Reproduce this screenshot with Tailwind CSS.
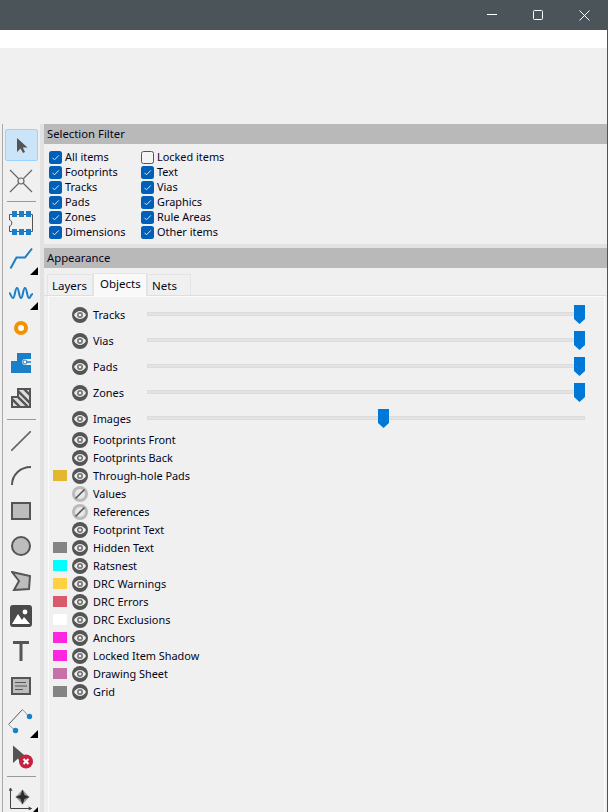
<!DOCTYPE html>
<html lang="en">
<head>
<meta charset="UTF-8">
<title>Appearance</title>
<script src="https://cdn.jsdelivr.net/npm/@tailwindcss/browser@4"></script>
</head>
<body class="w-[608px] h-[812px] overflow-hidden bg-[#f0f0f0] text-[10.900px] text-[#05051a] font-['Noto_Sans',sans-serif]">

<svg class="hidden">
  <symbol id="eye" viewBox="0 0 16 16">
    <circle cx="8" cy="8" r="8" fill="#555"/>
    <path d="M2 8C3.500 5.200 5.700 4 8 4S12.500 5.200 14 8C12.500 10.800 10.300 12 8 12S3.500 10.800 2 8Z" fill="#eee"/>
    <circle cx="8" cy="8" r="3" fill="#777"/>
    <circle cx="8" cy="8" r="1.300" fill="#eee"/>
  </symbol>
  <symbol id="eyeoff" viewBox="0 0 16 16">
    <circle cx="8" cy="8" r="8" fill="#bbb"/>
    <circle cx="8" cy="8" r="5" fill="#e8e8e8"/>
    <path d="M3.500 12.500L12.500 3.500" stroke="#555" stroke-width="1.600"/>
  </symbol>
  <symbol id="check" viewBox="0 0 13 13">
    <rect width="13" height="13" rx="2.500" fill="#005fb8"/>
    <path d="M3.500 6.800L5.500 8.800L9.800 4.400" fill="none" stroke="#dce9f5" stroke-width="1"/>
  </symbol>
  <symbol id="thumb" viewBox="0 0 11 19">
    <path d="M0 0H11V14L5.500 19L0 14Z" fill="#0078d7"/>
  </symbol>
  <symbol id="corner" viewBox="0 0 8 8">
    <path d="M8 0V8H0Z" fill="#000"/>
  </symbol>
</svg>

<!-- title bar -->
<div class="h-[30px] bg-[#4a5459] flex items-center justify-end pr-[1px]">
  <div class="w-[46px] h-[30px] flex items-center justify-center"><svg width="10" height="10"><path d="M0 4.500H10" stroke="#fff"/></svg></div>
  <div class="w-[46px] h-[30px] flex items-center justify-center"><svg width="10" height="10"><rect x=".5" y=".5" width="9" height="9" rx="1" fill="none" stroke="#fff"/></svg></div>
  <div class="w-[46px] h-[30px] flex items-center justify-center"><svg width="11" height="11"><path d="M.5.5L10.500 10.500M10.500.5L.5 10.500" stroke="#fff"/></svg></div>
</div>

<div class="h-[782px] border-r border-[#4a5459]">
  <div class="h-[18px] bg-white"></div>
  <div class="h-[76px]"></div>

  <div class="flex h-[688px]">
    <!-- left toolbar -->
    <div class="w-[3px] shrink-0 pl-[2px]"><div class="w-px h-full bg-[#a8a8a8]"></div></div>
    <div class="w-[37px] shrink-0 pt-[4px] pl-[2px]">
      <div class="h-[35px] w-[33px] pt-[1px]">
        <div class="w-[33px] h-[32px] rounded-[2px] bg-[#cce4f7] border border-[#99d1ff] flex items-center justify-center">
          <svg width="14" height="17" viewBox="0 0 14 17"><path d="M2 1V15L5.500 11.500L8 16L10 15L7.800 10.600H12.500Z" fill="#545454"/></svg>
        </div>
      </div>
      <div class="h-[35px] w-[32px] flex items-center justify-center">
        <svg width="26" height="26" viewBox="0 0 26 26"><path d="M2 2L10.500 10.500M24 2L15.500 10.500M2 24L10.500 15.500M24 24L15.500 15.500" stroke="#666" stroke-width="1.200"/><circle cx="13" cy="13" r="3" fill="#eee" stroke="#666" stroke-width="1.200"/></svg>
      </div>
      <div class="h-[7px] w-[33px] flex items-center"><div class="w-[29px] mx-auto h-px bg-[#999]"></div></div>
      <div class="h-[35px] w-[32px] flex items-center justify-center">
        <svg width="24" height="24" viewBox="0 0 24 24"><path d="M.5 3.500H23.500V20.500H.5V15C3.500 15 3.500 9 .5 9Z" fill="none" stroke="#555"/><path d="M3 0h5v6H3zM10 0h5v6h-5zM17 0h5v6h-5zM3 18h5v6H3zM10 18h5v6h-5zM17 18h5v6h-5z" fill="#1a7fc8"/></svg>
      </div>
      <div class="h-[35px] w-[33px] relative flex items-center justify-center pr-[1px]">
        <svg width="24" height="24" viewBox="0 0 24 24"><path d="M1.500 22.500L7.500 11.500H16L23 2.500" fill="none" stroke="#1a7fc8" stroke-width="2"/></svg>
        <svg class="absolute right-0 bottom-0" width="8" height="8"><use href="#corner"/></svg>
      </div>
      <div class="h-[35px] w-[33px] relative flex items-center justify-center pr-[1px]">
        <svg width="24" height="14" viewBox="0 0 24 14"><path d="M0 7C2 7 2 12 4 12S6 2 8 2 10 12 12 12 14 2 16 2 18 12 20 12 21 8 24 8" fill="none" stroke="#1a7fc8" stroke-width="2"/></svg>
        <svg class="absolute right-0 bottom-0" width="8" height="8"><use href="#corner"/></svg>
      </div>
      <div class="h-[35px] w-[32px] flex items-center justify-center">
        <svg width="14" height="14" viewBox="0 0 14 14"><circle cx="7" cy="7" r="5" fill="#fff" stroke="#f39200" stroke-width="4"/></svg>
      </div>
      <div class="h-[35px] w-[32px] flex items-center justify-center">
        <svg width="20" height="20" viewBox="0 0 20 20"><path d="M6 0H20V6H14C12 6 11 7.500 11 9S12 12 14 12H20V20H0V8H6Z" fill="#1a7fc8"/><circle cx="14" cy="9" r="2" fill="#fff" stroke="#1a7fc8"/><path d="M15 9H20" stroke="#1a7fc8" stroke-width="1.500"/></svg>
      </div>
      <div class="h-[35px] w-[32px] flex items-center justify-center">
        <svg width="20" height="20" viewBox="0 0 20 20"><defs><clipPath id="zc"><path d="M7 1H19V19H1V9H7Z"/></clipPath></defs><path d="M7 1H19V19H1V9H7Z" fill="#ddd" stroke="#555" stroke-width="2"/><path clip-path="url(#zc)" d="M4 0L22 18M0 2L20 22M10 -2L24 12M-2 8L12 22" stroke="#555" stroke-width="2.400"/></svg>
      </div>
      <div class="h-[8px] w-[33px] flex items-center pt-[1px]"><div class="w-[29px] mx-auto h-px bg-[#999]"></div></div>
      <div class="h-[35px] w-[32px] flex items-center justify-center">
        <svg width="20" height="20" viewBox="0 0 20 20"><path d="M0 20L20 0" stroke="#666" stroke-width="1.600"/></svg>
      </div>
      <div class="h-[35px] w-[32px] flex items-center justify-center">
        <svg width="20" height="20" viewBox="0 0 20 20"><path d="M1 19C1 9 9 1 20 1" fill="none" stroke="#555" stroke-width="2"/></svg>
      </div>
      <div class="h-[35px] w-[32px] flex items-center justify-center">
        <div class="w-[20px] h-[18px] bg-[#bdbdbd] border-2 border-[#555]"></div>
      </div>
      <div class="h-[35px] w-[32px] flex items-center justify-center">
        <div class="w-[20px] h-[20px] rounded-full bg-[#bdbdbd] border-2 border-[#555]"></div>
      </div>
      <div class="h-[35px] w-[32px] flex items-center justify-center">
        <svg width="20" height="20" viewBox="0 0 20 20"><path d="M1 1L19 5L18 18L3 19L8 10Z" fill="#bdbdbd" stroke="#555" stroke-width="2"/></svg>
      </div>
      <div class="h-[35px] w-[32px] flex items-center justify-center">
        <svg width="22" height="22" viewBox="0 0 22 22"><rect width="22" height="22" rx="3" fill="#4a4a4a"/><circle cx="15" cy="7" r="2.400" fill="#fff"/><path d="M2 19L8 9L12 15L14 12L20 19Z" fill="#fff"/></svg>
      </div>
      <div class="h-[35px] w-[32px] flex items-center justify-center">
        <svg width="16" height="20" viewBox="0 0 16 20"><path d="M0 0H16V3H9.500V20H6.500V3H0Z" fill="#555"/></svg>
      </div>
      <div class="h-[35px] w-[32px] flex items-center justify-center">
        <svg width="20" height="18" viewBox="0 0 20 18"><rect x="1" y="1" width="18" height="16" fill="#bdbdbd" stroke="#555" stroke-width="2"/><path d="M4 5.500H15M4 9H16M4 12.500H12" stroke="#555"/></svg>
      </div>
      <div class="h-[35px] w-[33px] relative flex items-center justify-center pr-[1px]">
        <svg width="26" height="26" viewBox="0 0 26 26"><path d="M.5 16.500L14.500 1.500" fill="none" stroke="#555"/><path d="M.5 16.500L7 22.500M14.500 1.500L21 8.500" fill="none" stroke="#999"/><circle cx="21.500" cy="8.500" r="2.700" fill="#1a7fc8"/><circle cx="7.500" cy="22.500" r="2.700" fill="#1a7fc8"/></svg>
        <svg class="absolute right-0 bottom-0" width="8" height="8"><use href="#corner"/></svg>
      </div>
      <div class="h-[35px] w-[32px] flex items-center justify-center">
        <svg width="26" height="26" viewBox="0 0 26 26"><path d="M5 2.500V20L10 15.500L12.500 20L15 19L13 14.500H19Z" fill="#545454"/><circle cx="18" cy="18.500" r="7" fill="#c8203f"/><path d="M15.500 16L20.500 21M20.500 16L15.500 21" stroke="#fff" stroke-width="2"/></svg>
      </div>
      <div class="h-[7px] w-[33px] flex items-center"><div class="w-[29px] mx-auto h-px bg-[#999]"></div></div>
      <div class="h-[35px] w-[33px] relative flex items-center justify-center pr-[1px]">
        <svg width="24" height="24" viewBox="0 0 24 24"><path d="M1.500 2V22.500H22.500M1.500 2L0 5M1.500 2L3 5M22.500 22.500L19.500 21M22.500 22.500L19.500 24" fill="none" stroke="#444"/><path d="M13.500 3.500L20.500 11L13.500 18.500L6.500 11Z" fill="#999"/><path d="M13.500 3.500L15.500 9L20.500 11L15.500 13L13.500 18.500L11.500 13L6.500 11L11.500 9Z" fill="#2a2a2a"/></svg>
        <svg class="absolute right-0 bottom-[3px]" width="5" height="5" viewBox="0 0 8 8"><use href="#corner"/></svg>
      </div>
    </div>
    <div class="w-[4px] shrink-0 bg-[#e2e2e2]"></div>

    <!-- right panels -->
    <div class="flex-1 min-w-0 flex flex-col">
      <div class="h-[20px] bg-[#b9b9b9] pl-[3px] text-[11.300px] leading-[20px]">Selection Filter</div>
      <div class="h-[100px] pt-[6px] pl-[5px] flex">
        <div class="w-[92px]">
          <label class="h-[15px] flex items-center gap-[3px]"><svg width="13" height="13"><use href="#check"/></svg>All items</label>
          <label class="h-[15px] flex items-center gap-[3px]"><svg width="13" height="13"><use href="#check"/></svg>Footprints</label>
          <label class="h-[15px] flex items-center gap-[3px]"><svg width="13" height="13"><use href="#check"/></svg>Tracks</label>
          <label class="h-[15px] flex items-center gap-[3px]"><svg width="13" height="13"><use href="#check"/></svg>Pads</label>
          <label class="h-[15px] flex items-center gap-[3px]"><svg width="13" height="13"><use href="#check"/></svg>Zones</label>
          <label class="h-[15px] flex items-center gap-[3px]"><svg width="13" height="13"><use href="#check"/></svg>Dimensions</label>
        </div>
        <div>
          <label class="h-[15px] flex items-center gap-[3px]"><span class="w-[13px] h-[13px] rounded-[2.500px] border border-[#555] bg-[#f4f4f4]"></span>Locked items</label>
          <label class="h-[15px] flex items-center gap-[3px]"><svg width="13" height="13"><use href="#check"/></svg>Text</label>
          <label class="h-[15px] flex items-center gap-[3px]"><svg width="13" height="13"><use href="#check"/></svg>Vias</label>
          <label class="h-[15px] flex items-center gap-[3px]"><svg width="13" height="13"><use href="#check"/></svg>Graphics</label>
          <label class="h-[15px] flex items-center gap-[3px]"><svg width="13" height="13"><use href="#check"/></svg>Rule Areas</label>
          <label class="h-[15px] flex items-center gap-[3px]"><svg width="13" height="13"><use href="#check"/></svg>Other items</label>
        </div>
      </div>
      <div class="h-[4px] bg-[#e2e2e2]"></div>
      <div class="h-[20px] bg-[#b9b9b9] pl-[3px] text-[11.300px] leading-[20px]">Appearance</div>

      <!-- tabs -->
      <div class="h-[28px] pl-[3px] flex items-end border-b border-[#dedede] text-[11.500px]">
        <div class="w-[46px] h-[21px] pt-[1px] pl-[4px] border border-b-0 border-[#e4e4e4] flex items-center">Layers</div>
        <div class="w-[54px] h-[23px] pl-[6px] border border-b-0 border-[#e4e4e4] bg-[#f9f9f9] flex items-center mb-[-1px] pb-[2px]">Objects</div>
        <div class="w-[44px] h-[21px] pt-[1px] pl-[4px] border border-b-0 border-[#e4e4e4] flex items-center">Nets</div>
      </div>

      <!-- object rows -->
      <div class="flex-1 ml-[4px] mr-[2px] border-l border-r border-t border-[#fbfbfb] pl-[4px] pt-[5px]">
        <div class="h-[26px] flex items-center">
          <span class="w-[19px]"></span><svg width="16" height="16"><use href="#eye"/></svg>
          <span class="w-[54px] ml-[5px]">Tracks</span>
          <div class="w-[438px] h-[4px] bg-[#e3e3e3] border border-[#dcdcdc] relative mt-[-3px]"><svg class="absolute left-[426px] top-[-8px]" width="11" height="19"><use href="#thumb"/></svg></div>
        </div>
        <div class="h-[26px] flex items-center">
          <span class="w-[19px]"></span><svg width="16" height="16"><use href="#eye"/></svg>
          <span class="w-[54px] ml-[5px]">Vias</span>
          <div class="w-[438px] h-[4px] bg-[#e3e3e3] border border-[#dcdcdc] relative mt-[-3px]"><svg class="absolute left-[426px] top-[-8px]" width="11" height="19"><use href="#thumb"/></svg></div>
        </div>
        <div class="h-[26px] flex items-center">
          <span class="w-[19px]"></span><svg width="16" height="16"><use href="#eye"/></svg>
          <span class="w-[54px] ml-[5px]">Pads</span>
          <div class="w-[438px] h-[4px] bg-[#e3e3e3] border border-[#dcdcdc] relative mt-[-3px]"><svg class="absolute left-[426px] top-[-8px]" width="11" height="19"><use href="#thumb"/></svg></div>
        </div>
        <div class="h-[26px] flex items-center">
          <span class="w-[19px]"></span><svg width="16" height="16"><use href="#eye"/></svg>
          <span class="w-[54px] ml-[5px]">Zones</span>
          <div class="w-[438px] h-[4px] bg-[#e3e3e3] border border-[#dcdcdc] relative mt-[-3px]"><svg class="absolute left-[426px] top-[-8px]" width="11" height="19"><use href="#thumb"/></svg></div>
        </div>
        <div class="h-[26px] flex items-center">
          <span class="w-[19px]"></span><svg width="16" height="16"><use href="#eye"/></svg>
          <span class="w-[54px] ml-[5px]">Images</span>
          <div class="w-[438px] h-[4px] bg-[#e3e3e3] border border-[#dcdcdc] relative mt-[-3px]"><svg class="absolute left-[230px] top-[-8px]" width="11" height="19"><use href="#thumb"/></svg></div>
        </div>
        <div class="h-[18px] mt-[-1px] flex items-center"><span class="w-[19px]"></span><svg width="16" height="16"><use href="#eye"/></svg><span class="ml-[5px]">Footprints Front</span></div>
        <div class="h-[18px] flex items-center"><span class="w-[19px]"></span><svg width="16" height="16"><use href="#eye"/></svg><span class="ml-[5px]">Footprints Back</span></div>
        <div class="h-[18px] flex items-center"><span class="w-[14px] h-[11px] mr-[5px] mb-[1px] bg-[#e3b72f]"></span><svg width="16" height="16"><use href="#eye"/></svg><span class="ml-[5px]">Through-hole Pads</span></div>
        <div class="h-[18px] flex items-center"><span class="w-[19px]"></span><svg width="16" height="16"><use href="#eyeoff"/></svg><span class="ml-[5px]">Values</span></div>
        <div class="h-[18px] flex items-center"><span class="w-[19px]"></span><svg width="16" height="16"><use href="#eyeoff"/></svg><span class="ml-[5px]">References</span></div>
        <div class="h-[18px] flex items-center"><span class="w-[19px]"></span><svg width="16" height="16"><use href="#eye"/></svg><span class="ml-[5px]">Footprint Text</span></div>
        <div class="h-[18px] flex items-center"><span class="w-[14px] h-[11px] mr-[5px] mb-[1px] bg-[#848484]"></span><svg width="16" height="16"><use href="#eye"/></svg><span class="ml-[5px]">Hidden Text</span></div>
        <div class="h-[18px] flex items-center"><span class="w-[14px] h-[11px] mr-[5px] mb-[1px] bg-[#00ffff]"></span><svg width="16" height="16"><use href="#eye"/></svg><span class="ml-[5px]">Ratsnest</span></div>
        <div class="h-[18px] flex items-center"><span class="w-[14px] h-[11px] mr-[5px] mb-[1px] bg-[#ffd042]"></span><svg width="16" height="16"><use href="#eye"/></svg><span class="ml-[5px]">DRC Warnings</span></div>
        <div class="h-[18px] flex items-center"><span class="w-[14px] h-[11px] mr-[5px] mb-[1px] bg-[#d85a6b]"></span><svg width="16" height="16"><use href="#eye"/></svg><span class="ml-[5px]">DRC Errors</span></div>
        <div class="h-[18px] flex items-center"><span class="w-[14px] h-[11px] mr-[5px] mb-[1px] bg-white"></span><svg width="16" height="16"><use href="#eye"/></svg><span class="ml-[5px]">DRC Exclusions</span></div>
        <div class="h-[18px] flex items-center"><span class="w-[14px] h-[11px] mr-[5px] mb-[1px] bg-[#ff26e2]"></span><svg width="16" height="16"><use href="#eye"/></svg><span class="ml-[5px]">Anchors</span></div>
        <div class="h-[18px] flex items-center"><span class="w-[14px] h-[11px] mr-[5px] mb-[1px] bg-[#ff26e2]"></span><svg width="16" height="16"><use href="#eye"/></svg><span class="ml-[5px]">Locked Item Shadow</span></div>
        <div class="h-[18px] flex items-center"><span class="w-[14px] h-[11px] mr-[5px] mb-[1px] bg-[#c870a8]"></span><svg width="16" height="16"><use href="#eye"/></svg><span class="ml-[5px]">Drawing Sheet</span></div>
        <div class="h-[18px] flex items-center"><span class="w-[14px] h-[11px] mr-[5px] mb-[1px] bg-[#848484]"></span><svg width="16" height="16"><use href="#eye"/></svg><span class="ml-[5px]">Grid</span></div>
      </div>
    </div>
  </div>
</div>
</body>
</html>
